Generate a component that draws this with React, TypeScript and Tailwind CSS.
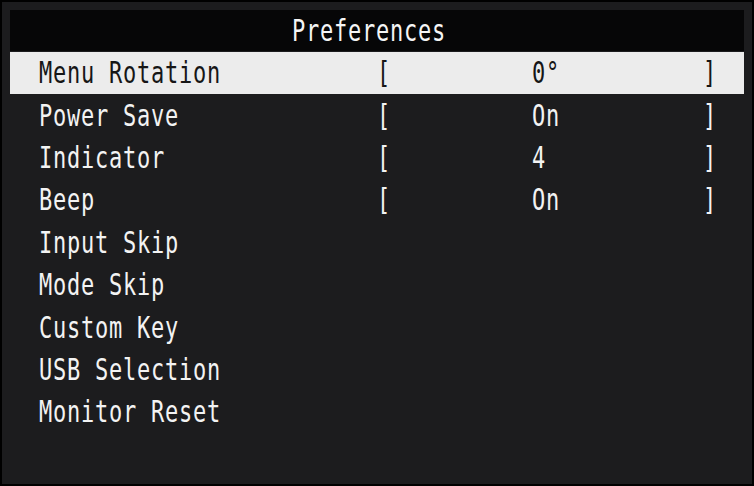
const ROWS: { label: string; value?: string }[] = [
  { label: 'Menu Rotation', value: '0°' },
  { label: 'Power Save', value: 'On' },
  { label: 'Indicator', value: '4' },
  { label: 'Beep', value: 'On' },
  { label: 'Input Skip' },
  { label: 'Mode Skip' },
  { label: 'Custom Key' },
  { label: 'USB Selection' },
  { label: 'Monitor Reset' },
]

const OSD_TEXT = "font-['DejaVu_Sans_Mono',monospace] text-[22px] leading-none tracking-[0.75px] inline-block scale-y-[1.36] whitespace-pre"

function MenuRow({ label, value, selected }: { label: string; value?: string; selected: boolean }) {
  return (
    <div
      className={`flex h-[42.4px] items-center pl-[29px] ${selected ? 'bg-[#ececec] text-[#161616]' : 'text-[#f3f3f3]'}`}
    >
      <span className={`w-[338px] ${OSD_TEXT}`}>{label}</span>
      {value && (
        <>
          <span className={`w-[155px] ${OSD_TEXT}`}>[</span>
          <span className={`w-[171px] ${OSD_TEXT}`}>{value}</span>
          <span className={OSD_TEXT}>]</span>
        </>
      )}
    </div>
  )
}

export default function App() {
  return (
    <div className="h-[486px] w-[754px] border-2 border-black bg-[#1c1c1e] p-[8px]">
      <header className="flex h-[41px] items-center bg-[#060607] pl-[282px] text-[#f5f5f5]">
        <span className={OSD_TEXT}>Preferences</span>
      </header>
      <div className="mt-[1px]">
        {ROWS.map((row, i) => (
          <MenuRow key={row.label} label={row.label} value={row.value} selected={i === 0} />
        ))}
      </div>
    </div>
  )
}
